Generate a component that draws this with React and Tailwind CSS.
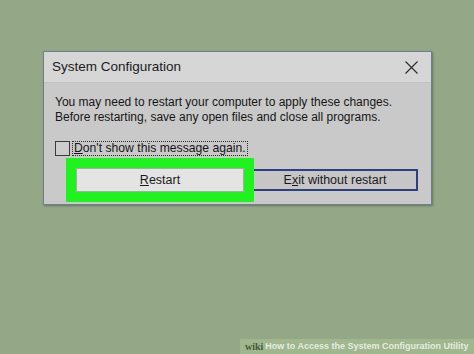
import React from 'react';

const CloseIcon = () => (
  <svg width="13" height="13" viewBox="0 0 13 13" fill="none">
    <path d="M0.5 0.5 L12.5 12.5 M12.5 0.5 L0.5 12.5" stroke="#2a2a2a" strokeWidth="1.1" />
  </svg>
);

const App = () => {
  return (
    <div className="w-[474px] h-[354px] bg-[#94a887] flex flex-col overflow-hidden font-['Liberation_Sans',sans-serif]">
      {/* Dialog */}
      <div className="ml-[43px] mt-[51px] w-[389px] h-[154px] border border-[#6e7c96] bg-[#c9c9c9] shadow-[1px_1px_2px_rgba(60,70,60,0.5)] flex flex-col">
        {/* Title bar */}
        <div className="h-[31px] shrink-0 bg-[#d6d6d6] flex items-center justify-between pl-[8px] pr-[13px] border-b border-[#c2c2c2]">
          <span className="text-[13.5px] text-[#1c1c1c]">System Configuration</span>
          <CloseIcon />
        </div>

        {/* Message */}
        <div className="pl-[11px] pt-[12px] text-[12px] leading-[14.5px] text-[#161616]">
          <p>You may need to restart your computer to apply these changes.</p>
          <p>Before restarting, save any open files and close all programs.</p>
        </div>

        {/* Checkbox */}
        <div className="pl-[11px] mt-[17px] flex items-center">
          <div className="w-[15px] h-[15px] border border-[#3a3a3a] bg-[#cdcdcd]" />
          <span className="ml-[2px] px-[1px] h-[15px] flex items-center border border-dotted border-[#2a2a2a] text-[12.2px] leading-none text-[#161616]">
            <span><span className="underline">D</span>on't show this message again.</span>
          </span>
        </div>

        {/* Buttons */}
        <div className="mt-[2px] flex items-center">
          <div className="ml-[22px] p-[10px] bg-[#1ff21f]">
            <div className="w-[168px] h-[24px] bg-[#e4e4e4] border border-[#a9a9a9] flex items-center justify-center text-[12.5px] text-[#1a1a1a]">
              <span><span className="underline">R</span>estart</span>
            </div>
          </div>
          <div className="w-[164px] h-[22px] border-2 border-[#2f3f86] border-l-0 bg-[#c6c6c6] flex items-center justify-center text-[12.5px] text-[#1a1a1a]">
            <span>E<span className="underline">x</span>it without restart</span>
          </div>
        </div>
      </div>

      {/* Watermark */}
      <div className="mt-auto self-end w-[234px] h-[15px] bg-[#a0b68f] flex items-center pl-[5px] gap-[2px]">
        <span className="text-[10px] font-bold text-[#4b5a3c] font-['Liberation_Serif',serif] leading-none">wiki</span>
        <span className="text-[9px] font-bold text-[#eef4e8]/90 leading-none whitespace-nowrap">How to Access the System Configuration Utility</span>
      </div>
    </div>
  );
};

export default App;
